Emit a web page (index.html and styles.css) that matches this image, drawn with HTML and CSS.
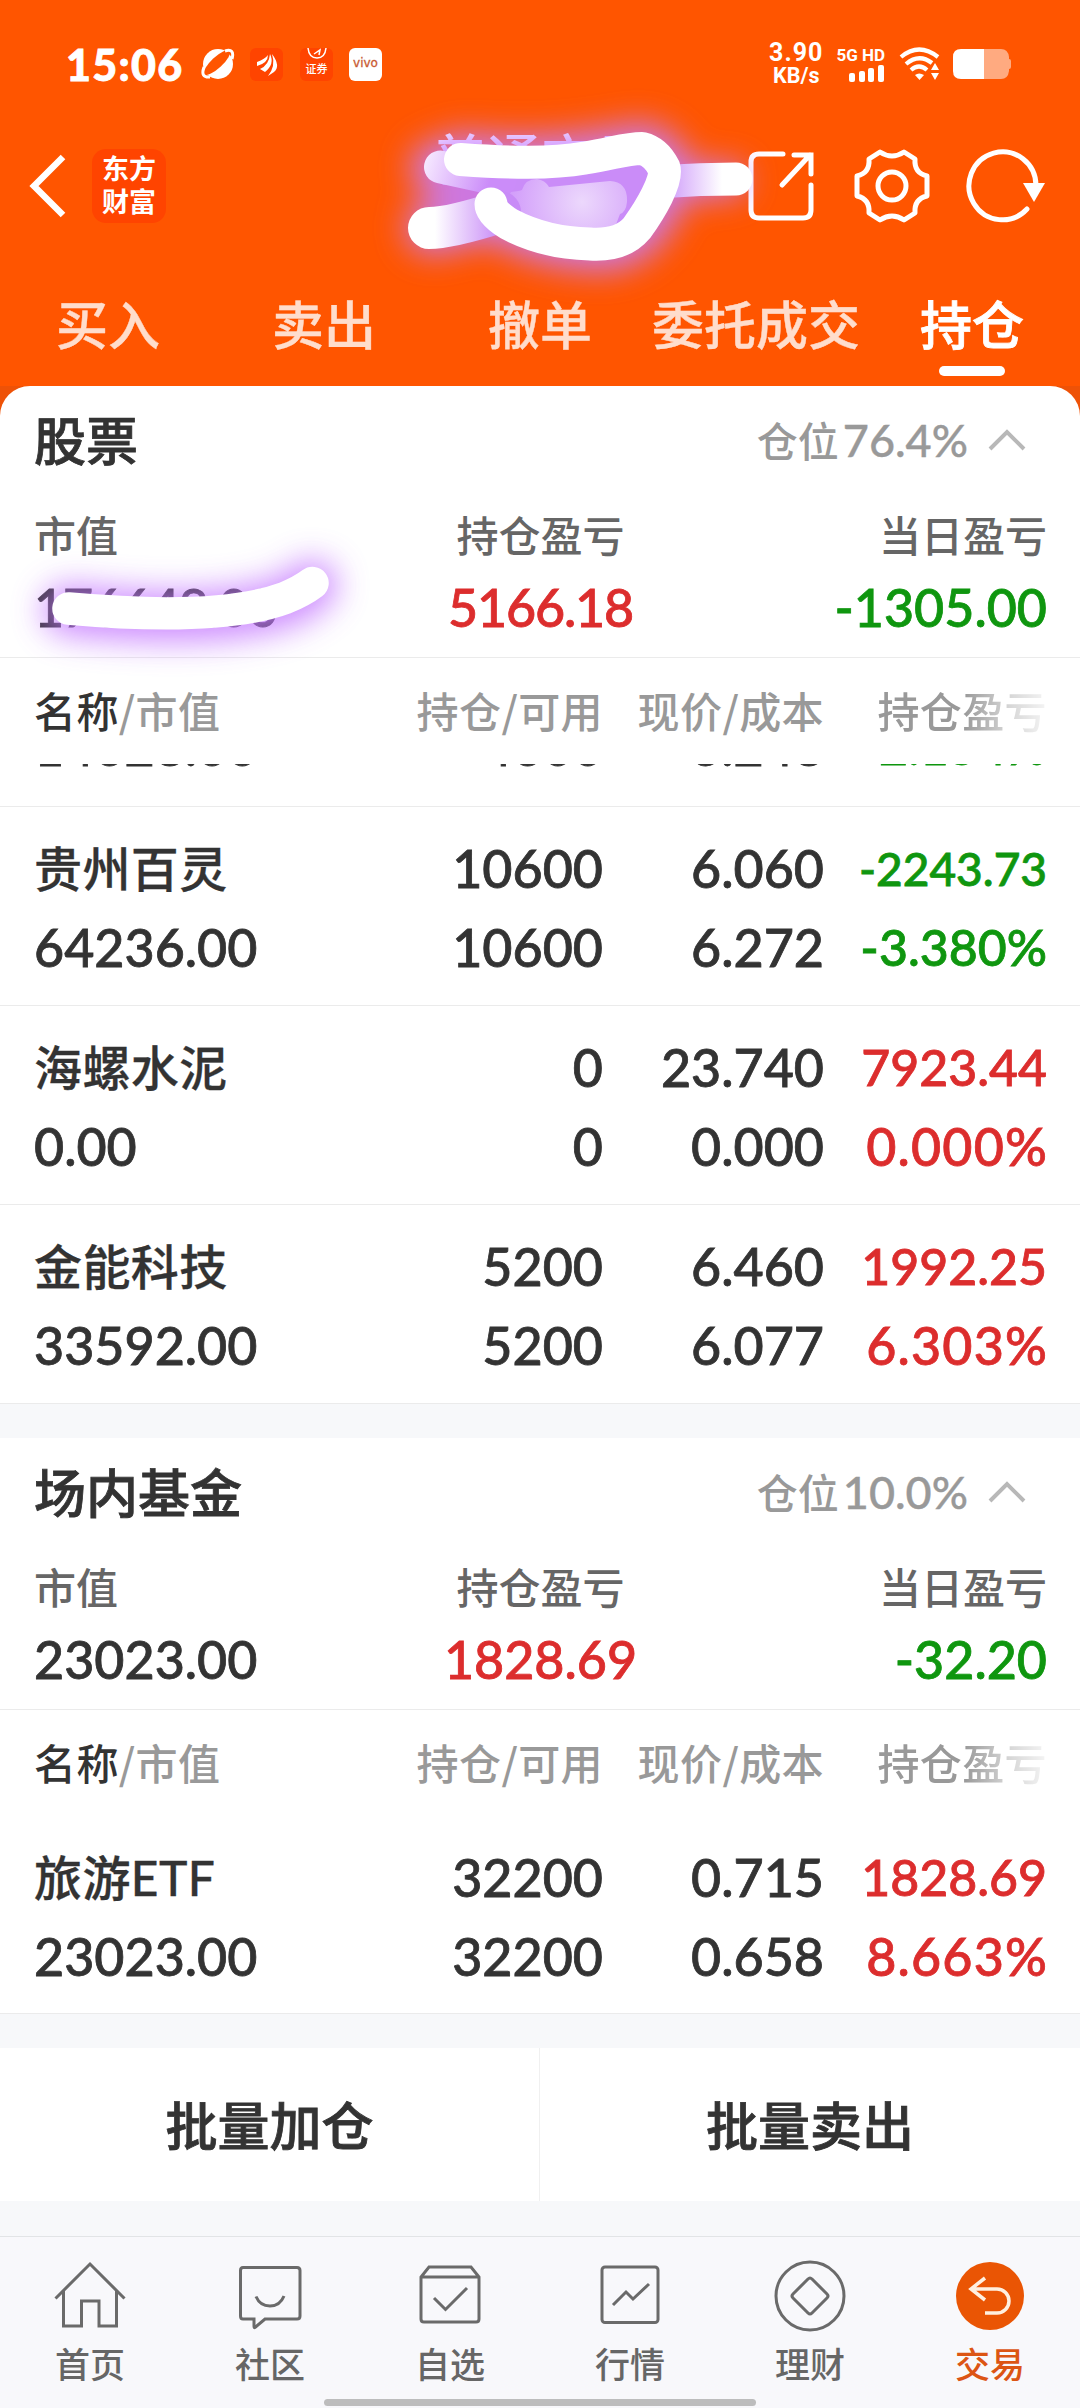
FILE: index.html
```html
<!DOCTYPE html>
<html lang="zh-CN">
<head>
    <meta charset="UTF-8">
    <meta name="viewport" content="width=device-width, initial-scale=1.0">
    <title>持仓</title>
    <link rel="stylesheet" href="styles.css">
</head>
<body>

<header class="header">
    <div class="status-bar">
        <div class="status-left">
            <span class="clock">15:06</span>
            <svg class="planet" width="34" height="34" viewBox="0 0 34 34">
                <circle cx="17" cy="17" r="15" fill="#fff"/>
                <ellipse cx="16" cy="15.500" rx="17" ry="5.500" transform="rotate(-43 16 15.500)" fill="#ff5500"/>
                <path d="M3 20Q-1 31 9 30M24 4Q34 1 31 12" fill="none" stroke="#fff" stroke-width="3"/>
            </svg>
            <span class="mini-app">
                <svg width="33" height="33" viewBox="0 0 33 33" fill="#fff">
                    <path d="M7 14Q15 11 18 7Q18 15 7 18Z"/>
                    <path d="M10 21Q19 17 20 6Q25 16 15 24Z"/>
                    <path d="M18 28Q26 18 22 6Q31 18 24 24Z"/>
                </svg>
            </span>
            <span class="mini-app mini-zq">
                <svg width="22" height="11" viewBox="0 0 22 11" fill="none" stroke="#fff" stroke-width="1.5">
                    <path d="M2 0Q3 10 11 10Q19 10 20 0M8 6L14 2L13 7"/>
                </svg>
                <span>证券</span>
            </span>
            <span class="mini-app mini-vivo">vivo</span>
        </div>
        <div class="status-right">
            <div class="speed"><span>3.90</span><span class="unit">KB/s</span></div>
            <div class="signal">
                <span>5G HD</span>
                <svg width="36" height="17" viewBox="0 0 36 17" fill="#fff">
                    <rect x="0" y="8" width="6" height="9" rx="2"/>
                    <rect x="10" y="6" width="6" height="11" rx="2"/>
                    <rect x="19" y="3" width="6" height="14" rx="2"/>
                    <rect x="29" y="0" width="6" height="17" rx="2"/>
                </svg>
            </div>
            <svg class="wifi" width="42" height="34" viewBox="0 0 42 34">
                <g fill="none" stroke="#fff" stroke-width="4.2">
                    <path d="M2 10Q20 -5 39 10"/>
                    <path d="M7 17Q20 6 33 16"/>
                    <path d="M12 23Q20 16 28 23"/>
                </g>
                <path d="M16 28Q20 25 25 28L20.500 33Z" fill="#fff"/>
                <path d="M32 23L36 16L40 23ZM32 26L36 33L40 26Z" fill="#fff"/>
            </svg>
            <svg class="battery" width="58" height="30" viewBox="0 0 58 30">
                <path d="M31 0H48Q55 0 56 8V10Q58 10 58 12V18Q58 20 56 20V22Q55 30 48 30H31Z" fill="#ffaa80"/>
                <path d="M31 0H8Q0 0 0 8V22Q0 30 8 30H31Z" fill="#fff"/>
            </svg>
        </div>
    </div>

    <div class="title-bar">
        <svg class="back" width="38" height="66" viewBox="0 0 38 66">
            <path d="M34 4L5 33L34 62" fill="none" stroke="#fff" stroke-width="6.500"/>
        </svg>
        <div class="brand">东方<br>财富</div>
        <div class="account">普通交易</div>
        <div class="actions">
            <svg width="68" height="74" viewBox="0 0 68 74" fill="none" stroke="#fff" stroke-width="5" stroke-linecap="round">
                <path d="M35 5H11Q3 5 3 13V61Q3 69 11 69H55Q63 69 63 61V36"/>
                <path d="M34 36L62 6M46 6H63V25"/>
            </svg>
            <svg width="76" height="74" viewBox="0 0 76 74" fill="none" stroke="#fff" stroke-width="5" stroke-linejoin="round">
                <path d="M26 3Q38 11 50 3L61 10Q60 24 73 27V47Q60 50 61 64L50 71Q38 63 26 71L15 64Q16 50 3 47V27Q16 24 15 10Z"/>
                <circle cx="38" cy="37" r="14"/>
            </svg>
            <svg width="82" height="74" viewBox="0 0 82 74">
                <path d="M62 60A33.500 34 0 1 1 71 37" fill="none" stroke="#fff" stroke-width="5" stroke-linecap="round"/>
                <path d="M58 34H80L69 53Z" fill="#fff"/>
            </svg>
        </div>
    </div>

    <nav class="tabs">
        <a>买入</a>
        <a>卖出</a>
        <a>撤单</a>
        <a>委托成交</a>
        <a class="active">持仓</a>
    </nav>
</header>

<main class="content">
    <section class="card first">
        <div class="card-title">
            <h2>股票</h2>
            <span class="position">仓位<b>76.4%</b></span>
            <svg width="38" height="24" viewBox="0 0 38 24"><path d="M2 21L19 4L36 21" fill="none" stroke="#b8b8b8" stroke-width="4"/></svg>
        </div>
        <div class="summary">
            <div><label>市值</label><span class="num tight">176648.00</span></div>
            <div><label>持仓盈亏</label><span class="num tight up">5166.18</span></div>
            <div><label>当日盈亏</label><span class="num down">-1305.00</span></div>
        </div>
        <div class="row head">
            <span><em>名称</em>/市值</span>
            <span>持仓/可用</span>
            <span>现价/成本</span>
            <span class="fade">持仓盈亏</span>
        </div>
        <div class="row clipped">
            <div>14628.00</div>
            <div>4600</div>
            <div>3.248</div>
            <div class="down pct">-2.154%</div>
        </div>
        <div class="row">
            <div><span class="name">贵州百灵</span>64236.00</div>
            <div>10600<br>10600</div>
            <div>6.060<br>6.272</div>
            <div class="down small">-2243.73<br><span class="pct">-3.380%</span></div>
        </div>
        <div class="row">
            <div><span class="name">海螺水泥</span>0.00</div>
            <div>0<br>0</div>
            <div>23.740<br>0.000</div>
            <div class="up mid">7923.44<br><span class="wide">0.000%</span></div>
        </div>
        <div class="row">
            <div><span class="name">金能科技</span>33592.00</div>
            <div>5200<br>5200</div>
            <div>6.460<br>6.077</div>
            <div class="up mid">1992.25<br><span class="wide">6.303%</span></div>
        </div>
    </section>

    <section class="card">
        <div class="card-title">
            <h2>场内基金</h2>
            <span class="position">仓位<b>10.0%</b></span>
            <svg width="38" height="24" viewBox="0 0 38 24"><path d="M2 21L19 4L36 21" fill="none" stroke="#b8b8b8" stroke-width="4"/></svg>
        </div>
        <div class="summary">
            <div><label>市值</label><span class="num">23023.00</span></div>
            <div><label>持仓盈亏</label><span class="num up">1828.69</span></div>
            <div><label>当日盈亏</label><span class="num down">-32.20</span></div>
        </div>
        <div class="row head">
            <span><em>名称</em>/市值</span>
            <span>持仓/可用</span>
            <span>现价/成本</span>
            <span class="fade">持仓盈亏</span>
        </div>
        <div class="row last">
            <div><span class="name">旅游ETF</span>23023.00</div>
            <div>32200<br>32200</div>
            <div>0.715<br>0.658</div>
            <div class="up mid">1828.69<br><span class="wide">8.663%</span></div>
        </div>
    </section>

    <div class="batch">
        <button>批量加仓</button>
        <button>批量卖出</button>
    </div>
</main>

<footer class="tab-bar">
    <a>
        <svg viewBox="0 0 72 72"><path d="M1.500 38.500L36 4L70.500 38.500M9.500 30V66H27.500V41H45V66H62.500V30"/></svg>
        <span>首页</span>
    </a>
    <a>
        <svg viewBox="0 0 72 72"><path d="M9 7.500H63Q66 7.500 66 10.500V56Q66 59 63 59H31L21 67.500Q20 68 20 66V59H9Q6.500 59 6.500 56V10.500Q6.500 7.500 9 7.500ZM22 36.500Q26 46 36 46T50 36"/></svg>
        <span>社区</span>
    </a>
    <a>
        <svg viewBox="0 0 72 72"><path d="M7 17V59Q7 62 10 62H62Q65 62 65 59V17L57 7H15ZM7 17H65M20 38L31.500 49.500L53 28"/></svg>
        <span>自选</span>
    </a>
    <a>
        <svg viewBox="0 0 72 72"><rect x="8" y="7" width="56" height="55.500" rx="3"/><path d="M19 45L32 32L39 39L55 24"/></svg>
        <span>行情</span>
    </a>
    <a>
        <svg viewBox="0 0 72 72"><circle cx="36" cy="36" r="34"/><path d="M34 19Q36 17 38 19L53 34Q55 36 53 38L38 53Q36 55 34 53L19 38Q17 36 19 34Z"/></svg>
        <span>理财</span>
    </a>
    <a class="active">
        <svg viewBox="0 0 72 72"><circle class="disc" cx="36" cy="36" r="34"/><path class="arrow" d="M31 18L17 29L31 40M17 29H43A12 12 0 0 1 43 53H31"/></svg>
        <span>交易</span>
    </a>
    <i class="home-indicator"></i>
</footer>

<!-- brush marks hiding the account name and total -->
<svg class="brush" width="1080" height="700" viewBox="0 0 1080 700">
    <defs>
        <filter id="glow" filterUnits="userSpaceOnUse" x="0" y="60" width="1080" height="640"><feGaussianBlur stdDeviation="16"/></filter>
        <linearGradient id="leftTop" gradientUnits="userSpaceOnUse" x1="425" y1="160" x2="490" y2="180">
            <stop offset="0" stop-color="#f6e9ff"/><stop offset="1" stop-color="#cb8cf9"/>
        </linearGradient>
        <linearGradient id="leftLow" gradientUnits="userSpaceOnUse" x1="435" y1="0" x2="500" y2="0">
            <stop offset="0" stop-color="#fff"/><stop offset="1" stop-color="#c88bf7"/>
        </linearGradient>
        <linearGradient id="right" gradientUnits="userSpaceOnUse" x1="672" y1="0" x2="722" y2="0">
            <stop offset="0" stop-color="#d3a5fa"/><stop offset="1" stop-color="#fff"/>
        </linearGradient>
        <radialGradient id="inner" gradientUnits="userSpaceOnUse" cx="582" cy="202" r="75">
            <stop offset="0" stop-color="#ecd8fc"/><stop offset="1" stop-color="#d19bfa"/>
        </radialGradient>
    </defs>
    <g filter="url(#glow)" fill="none" stroke="#c67dff" stroke-width="54" stroke-linecap="round" stroke-linejoin="round" opacity=".88">
        <path d="M460 159C500 163 560 166 642 149Q675 160 660 190Q640 250 590 244Q520 238 491 204" fill="#c67dff"/>
        <path d="M437 168L500 185M432 228L500 210"/>
        <path d="M660 183L730 180" stroke-width="34"/>
    </g>
    <path d="M480 165L640 155L665 175L625 238L500 225Z" fill="#ca8cf8"/>
    <path d="M505 192Q518 192 522 190Q525 179 537 179Q545 180 549 187L610 181Q628 182 627 202Q626 212 620 214L612 235H560L500 220Z" fill="url(#inner)"/>
    <g fill="none" stroke-linecap="round">
        <path d="M440.500 167L500 180" stroke="url(#leftTop)" stroke-width="33"/>
        <path d="M429 228Q450 228 500 212" stroke="url(#leftLow)" stroke-width="42"/>
        <path d="M665 181.500Q700 179 736 179" stroke="url(#right)" stroke-width="33"/>
        <path d="M460.500 159.500C510 163 550 164 585 158C612 154 625 148.500 642 148.500Q656 152 664 168C668 180 650 210 637 228Q622 246 590 244Q545 243 509 224Q491 213 491 204" stroke="#fff" stroke-width="33" stroke-linejoin="round"/>
    </g>

    <g fill="none" stroke-linecap="round" stroke-linejoin="round">
        <path d="M68 610Q220 627 290 600Q305 592 312 585" stroke="#c477ff" stroke-width="50" filter="url(#glow)" opacity=".85"/>
        <path d="M68.500 608.500Q220 622 285 598Q302 591 312.500 583" stroke="#fff" stroke-width="32.500"/>
    </g>
</svg>

</body>
</html>
```
FILE: styles.css
```css
* {
    box-sizing: border-box;
}
body {
    margin: 0;
    width: 1080px;
    height: 2408px;
    position: relative;
    overflow: hidden;
    background: #f7f8fa;
    color: #333;
    font-family: Lato, "Noto Sans CJK SC", sans-serif;
    font-weight: 500;
}
svg {
    display: block;
    flex: none;
}

/* Header */
.header {
    height: 386px;
    background: #ff5500;
    color: #fff;
}
.status-bar {
    height: 128px;
    padding: 0 69px 0 66px;
    display: flex;
    justify-content: space-between;
    align-items: center;
}
.status-left, .status-right {
    display: flex;
    align-items: center;
}
.clock {
    width: 135px;
    font-size: 43px;
    font-weight: 900;
    letter-spacing: 1.3px;
    -webkit-text-stroke: 0.8px #fff;
}
.planet {
    margin-right: 15px;
}
.mini-app {
    width: 33px;
    height: 33px;
    margin-right: 17px;
    border-radius: 6px;
    background: #ff4400;
    overflow: hidden;
}
.mini-zq {
    display: flex;
    flex-direction: column;
    align-items: center;
    font-size: 11px;
    line-height: 19px;
}
.mini-vivo {
    margin-left: -1px;
    background: #fff;
    color: #c85a32;
    font: 12px/31px "DejaVu Sans", sans-serif;
    letter-spacing: 0;
    text-align: center;
    -webkit-text-stroke: 0.3px;
}
.speed {
    display: flex;
    flex-direction: column;
    align-items: center;
    font: bold 25px/23px Roboto, sans-serif;
    letter-spacing: 1px;
    margin-right: 13px;
}
.speed .unit {
    font-size: 21.500px;
    letter-spacing: 0;
}
.signal {
    display: flex;
    flex-direction: column;
    align-items: flex-end;
    gap: 1px;
    font: bold 17px/18px Roboto, sans-serif;
    margin-right: 14px;
}
.wifi {
    margin-right: 12px;
}
.title-bar {
    height: 116px;
    padding-left: 29px;
    display: flex;
    align-items: center;
}
.brand {
    width: 74px;
    height: 74px;
    margin-left: 25px;
    padding-top: 3px;
    border-radius: 14px;
    background: #ff4400;
    text-align: center;
    font-size: 27px;
    font-weight: 700;
    line-height: 33px;
}
.account {
    margin: -52px 0 0 267px;
    width: 315px;
    font-size: 54px;
    line-height: 60px;
}
.actions {
    display: flex;
    align-items: center;
}
.actions svg:nth-child(2) {
    margin: 0 35px 0 38px;
}
.tabs {
    height: 142px;
    display: grid;
    grid-template-columns: repeat(5, 216px);
    text-align: center;
    font-size: 52px;
    line-height: 76px;
    padding-top: 43px;
}
.tabs a {
    color: #ffddcc;
    -webkit-text-stroke: 0.4px;
}
.tabs .active {
    color: #fff;
    -webkit-text-stroke: 0.8px #fff;
}
.tabs .active::after {
    content: "";
    display: block;
    width: 66px;
    height: 10px;
    margin: 3px auto 0;
    border-radius: 5px;
    background: #fff;
}

/* Sections */
.content {
    background: linear-gradient(#ee5207 60px, transparent 60px);
}
.card {
    background: #fff;
    margin-bottom: 34px;
}
.card.first {
    border-radius: 30px 30px 0 0;
}
.card-title {
    height: 110px;
    padding: 0 54px 0 34px;
    display: flex;
    align-items: center;
}
.card-title h2 {
    margin: 0 auto 0 0;
    font-size: 52px;
    line-height: 76px;
    font-weight: 500;
    -webkit-text-stroke: 0.8px #333;
}
.card-title svg {
    margin-top: -3px;
}
.position {
    margin: -4px 20px 0 0;
    font-size: 41px;
    color: #999;
}
.position b {
    font-size: 45px;
    font-weight: 500;
    margin-left: 4px;
    -webkit-text-stroke: 0.4px #999;
}
.summary {
    height: 162px;
    padding: 4px 33px 0 34px;
    display: grid;
    grid-template-columns: 349px 315px 349px;
    border-bottom: 1px solid #ebebeb;
}
.summary div {
    display: flex;
    flex-direction: column;
    align-items: flex-start;
}
.summary div:nth-child(2) {
    align-items: center;
}
.summary div:nth-child(3) {
    align-items: flex-end;
}
.summary label {
    font-size: 42px;
    line-height: 72px;
    color: #666;
}
.num {
    font-size: 52px;
    line-height: 70px;
    -webkit-text-stroke: 0.8px;
}
.tight {
    letter-spacing: -1.2px;
}
.row {
    height: 199px;
    padding: 22px 33px 0 34px;
    display: grid;
    grid-template-columns: 349px 220px 221px 223px;
    border-bottom: 1px solid #ebebeb;
    font-size: 52px;
    line-height: 79px;
    text-align: right;
    white-space: nowrap;
    -webkit-text-stroke: 0.8px;
}
.row > :first-child {
    text-align: left;
}
.row.head {
    height: 106px;
    padding-top: 12px;
    border: none;
    font-size: 42px;
    letter-spacing: 0.4px;
    color: #999;
    font-family: "Noto Sans CJK SC", sans-serif;
    -webkit-text-stroke: 0;
}
.head em {
    font-style: normal;
    color: #333;
}
.fade {
    -webkit-mask-image: linear-gradient(to right, #000 140px, rgba(0, 0, 0, 0.4) 185px, rgba(0, 0, 0, 0.1) 223px);
    mask-image: linear-gradient(to right, #000 140px, rgba(0, 0, 0, 0.4) 185px, rgba(0, 0, 0, 0.1) 223px);
}
.row.clipped {
    height: 43px;
    padding-top: 0;
    padding-bottom: 20px;
    overflow: hidden;
    align-content: end;
}
.row.last {
    height: 198px;
}
.name {
    display: block;
    font-size: 48px;
    letter-spacing: 0.4px;
    -webkit-text-stroke: 0.3px;
}
.small {
    font-size: 46px;
}
.row .pct {
    font-size: 50px;
}
.mid {
    font-size: 50px;
}
.wide {
    font-size: 52px;
    letter-spacing: 1.2px;
    margin-right: -1.2px;
}
.up {
    color: #dc2d2d;
}
.down {
    color: #0f960f;
}

.batch {
    height: 153px;
    display: grid;
    grid-template-columns: 1fr 1fr;
    background: #fff;
}
.batch button {
    border: none;
    background: none;
    color: #333;
    font: inherit;
    font-size: 52px;
    padding-bottom: 4px;
    -webkit-text-stroke: 0.8px #333;
}
.batch button:first-child {
    border-right: 1px solid #f0f0f0;
}

/* Bottom tab bar */
.tab-bar {
    height: 173px;
    margin-top: 35px;
    position: relative;
    display: grid;
    grid-template-columns: repeat(6, 1fr);
    background: #f8f8fb;
    border-top: 1px solid #e2e4e6;
}
.tab-bar a {
    padding-top: 23px;
    display: flex;
    flex-direction: column;
    align-items: center;
    color: #666;
    font-size: 35px;
    line-height: 65px;
}
.tab-bar svg {
    width: 72px;
    height: 72px;
    fill: none;
    stroke: #6a6a6a;
    stroke-width: 3;
}
.tab-bar .active {
    color: #dc5514;
}
.tab-bar .disc {
    fill: #ea5504;
    stroke: none;
}
.tab-bar .arrow {
    stroke: #fff0e0;
    stroke-width: 3.500;
}
.home-indicator {
    position: absolute;
    left: 324px;
    bottom: 3px;
    width: 432px;
    height: 7px;
    border-radius: 4px;
    background: #bdbdbd;
}

.brush {
    position: absolute;
    left: 0;
    top: 0;
    pointer-events: none;
}
```
